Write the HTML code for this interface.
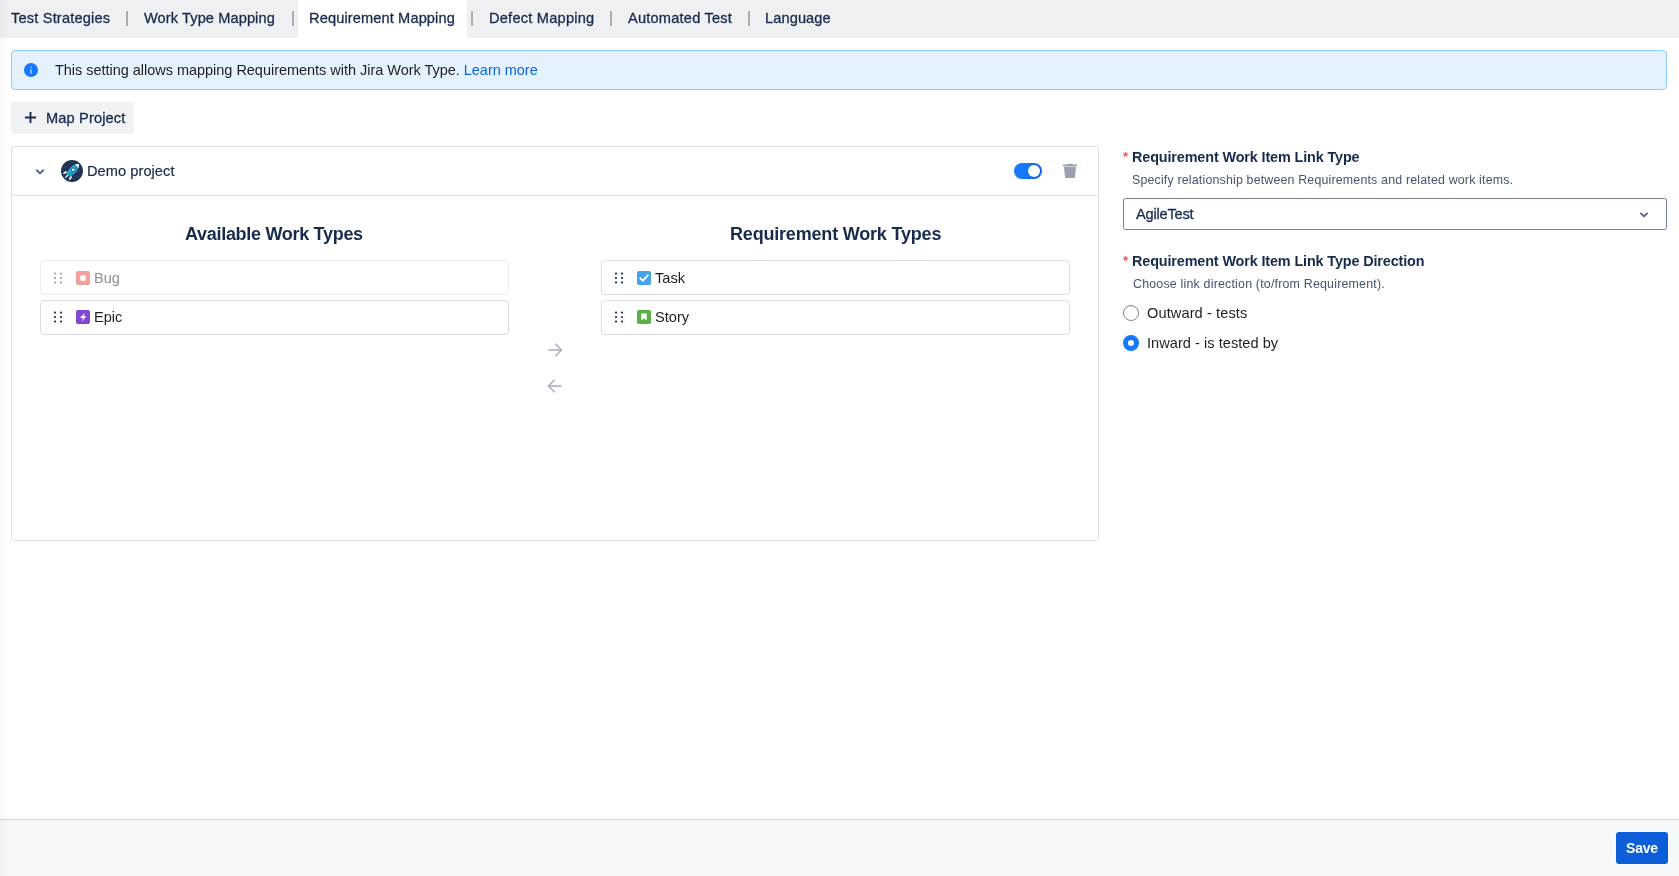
<!DOCTYPE html>
<html lang="en">
<head>
<meta charset="utf-8">
<title>Requirement Mapping</title>
<style>
*{box-sizing:border-box;margin:0;padding:0}
html,body{width:1679px;height:876px;overflow:hidden;background:#fff}
body{font-family:"Liberation Sans",Arial,sans-serif;font-size:14px;color:#172b4d;position:relative}
.abs{position:absolute}
.t{position:absolute;white-space:nowrap;line-height:20px;height:20px;will-change:transform}
.m{-webkit-text-stroke:.3px currentColor}
.m2{-webkit-text-stroke:.2px currentColor}
#edge{left:0;top:0;width:10px;height:876px;background:linear-gradient(90deg,rgba(0,0,0,.032),rgba(0,0,0,.016) 35%,rgba(0,0,0,0))}
#tabs{left:0;top:0;width:1679px;height:38px;background:#eff0f2}
#tabact{left:298px;top:0;width:169px;height:38px;background:#fff}
.sep{position:absolute;top:11px;width:2px;height:15px;background:#a8aeb9}
.tab{font-size:14.6px;color:#172b4d;top:8px}
#banner{left:11px;top:50px;width:1656px;height:40px;background:#e3f2fe;border:1px solid #91caff;border-radius:4px}
#btnmap{left:11px;top:102px;width:123px;height:32px;background:#f1f2f4;border-radius:3px}
#panel{left:11px;top:146px;width:1088px;height:395px;border:1px solid #dcdfe4;border-radius:2.500px;background:#fff}
#phead{left:11px;top:146px;width:1088px;height:50px;border:1px solid #dcdfe4;border-radius:2.500px;background:#fff}
.item{position:absolute;width:469px;height:35px;border:1px solid #d9dce3;border-radius:4px;background:#fff}
.h{font-weight:bold;font-size:18px;color:#172b4d;line-height:24px;height:24px}
#sel{left:1123px;top:198px;width:544px;height:32px;border:1px solid #73809a;border-radius:2.500px;background:#fff}
#footer{left:0;top:819px;width:1679px;height:57px;background:#f7f8f9;border-top:1px solid #d5d9df}
#save{left:1616px;top:832px;width:52px;height:32px;background:#0c5fd9;border-radius:3px}
.lbl{font-weight:bold;font-size:14.4px;color:#172b4d}
.help{font-size:12.4px;color:#44546f}
.star{color:#ff4d4f;font-size:13px;font-weight:bold}
</style>
</head>
<body>
<div class="abs" id="tabs"></div>
<div class="abs" id="tabact"></div>
<div class="sep" style="left:126px"></div>
<div class="sep" style="left:292px"></div>
<div class="sep" style="left:471px"></div>
<div class="sep" style="left:610px"></div>
<div class="sep" style="left:748px"></div>
<div class="t tab m" style="left:11px;letter-spacing:0.179px">Test Strategies</div>
<div class="t tab m" style="left:144px;letter-spacing:0.094px">Work Type Mapping</div>
<div class="t tab m" style="left:309px;letter-spacing:0.125px">Requirement Mapping</div>
<div class="t tab m" style="left:488.600px;letter-spacing:0.231px">Defect Mapping</div>
<div class="t tab m" style="left:628px;letter-spacing:0.212px">Automated Test</div>
<div class="t tab m" style="left:765.300px;letter-spacing:0.107px">Language</div>

<div class="abs" id="banner"></div>
<svg class="abs" style="left:24px;top:63px" width="14" height="14" viewBox="0 0 14 14"><circle cx="7" cy="7" r="7" fill="#1677ff"/><g fill="#fff" opacity=".62"><rect x="6.200" y="3.600" width="1.600" height="1.500"/><rect x="6.200" y="6.400" width="1.600" height="4.100"/></g></svg>
<div class="t" id="bantext" style="left:54.500px;top:60px;font-size:14.5px;letter-spacing:-0.027px;color:#1f1f1f">This setting allows mapping Requirements with Jira Work Type. <span style="color:#0c66e4">Learn more</span></div>

<div class="abs" id="btnmap"></div>
<svg class="abs" style="left:24.400px;top:111.300px" width="13" height="13" viewBox="0 0 13 13"><path d="M6.500 .9v11.200M.9 6.500h11.200" stroke="#172b4d" stroke-width="1.900" fill="none"/></svg>
<div class="t m" style="left:46px;top:108px;font-size:14.6px;color:#172b4d;letter-spacing:0.15px">Map Project</div>

<div class="abs" id="panel"></div>
<div class="abs" id="phead"></div>
<svg class="abs" style="left:34px;top:166.500px" width="12" height="10" viewBox="0 0 12 10"><path d="M2.800 3.300L6 6.400l3.200-3.100" stroke="#55637d" stroke-width="1.900" fill="none" stroke-linecap="round" stroke-linejoin="round"/></svg>
<svg class="abs" style="left:61px;top:160px" width="22" height="22" viewBox="0 0 22 22"><circle cx="11" cy="11" r="11" fill="#213455"/><g fill="#5d6f8f" opacity=".55"><circle cx="9" cy="3.500" r=".6"/><circle cx="3.600" cy="7.400" r=".6"/><circle cx="18.200" cy="11.600" r=".6"/><circle cx="16.200" cy="16.600" r=".6"/><circle cx="12.600" cy="18.200" r=".5"/></g><g transform="rotate(45 11 11)"><path d="M8 14.300L6.200 16.400V19.700L8.200 17.600zM14 14.300l1.800 2.100v3.300l-2-2.100z" fill="#fff"/><path d="M10.100 16.500h1.800l-.3 3.900h-1.200z" fill="#eef7fb"/><path d="M11 1.200C13.600 3.200 14.600 6.500 14.500 9.500 14.400 12.500 13.900 15 13.300 16.900H8.700C8.100 15 7.600 12.500 7.500 9.500 7.400 6.500 8.400 3.200 11 1.200z" fill="#1da9d2"/><path d="M11 1.200C13.600 3.200 14.600 6.500 14.500 9.500 14.400 12.500 13.900 15 13.300 16.900H11z" fill="#1a97c2"/><path d="M11 1.200c1.100.8 1.900 1.800 2.500 2.900h-5C9.100 3 9.900 2 11 1.200z" fill="#fff"/><circle cx="11" cy="9.200" r="2" fill="#1b5f86"/><circle cx="11" cy="9.200" r="1.350" fill="#fff"/></g></svg>
<div class="t m2" style="left:87.400px;top:161px;font-size:14.6px;color:#172b4d;letter-spacing:0.06px">Demo project</div>
<div class="abs" style="left:1014px;top:163px;width:28px;height:16px;border-radius:8px;background:linear-gradient(100deg,#1677ff 40%,#0c62e0)"></div>
<div class="abs" style="left:1028px;top:165px;width:12px;height:12px;border-radius:6px;background:#fff"></div>
<svg class="abs" style="left:1062px;top:163px" width="16" height="16" viewBox="0 0 16 16"><path d="M5.500.7h5l.6.900h3.800v2H1.100v-2h3.800z" fill="#9aa1b0"/><path d="M2 3.900h12l-1 10.400q-.1.800-.9.800H3.900q-.8 0-.9-.8z" fill="#9aa1b0"/></svg>

<div class="t h" style="left:185px;top:222px;letter-spacing:-0.295px">Available Work Types</div>
<div class="t h" style="left:730px;top:222px;letter-spacing:-0.19px">Requirement Work Types</div>

<div class="item" style="left:40px;top:260.300px;border-color:#e9ebee"></div>
<div class="item" style="left:40px;top:300px;height:34.500px"></div>
<div class="item" style="left:601px;top:260.300px"></div>
<div class="item" style="left:601px;top:300px;height:34.500px"></div>

<div class="t" style="left:94px;top:268px;font-size:14.6px;color:#8f8f8f">Bug</div>
<div class="t" style="left:94px;top:307px;font-size:14.6px;color:#1f1f1f">Epic</div>
<div class="t" style="left:655px;top:268px;font-size:14.6px;color:#1f1f1f">Task</div>
<div class="t" style="left:655px;top:307px;font-size:14.6px;color:#1f1f1f">Story</div>

<div class="abs" id="sel"></div>
<!-- drag handles -->
<svg class="abs dh" style="left:614px;top:272px" width="10" height="12" viewBox="0 0 10 12"><g fill="#172b4d"><circle cx="2" cy="1.500" r="1.100"/><circle cx="8" cy="1.500" r="1.100"/><circle cx="2" cy="6" r="1.100"/><circle cx="8" cy="6" r="1.100"/><circle cx="2" cy="10.500" r="1.100"/><circle cx="8" cy="10.500" r="1.100"/></g></svg>
<svg class="abs dh" style="left:614px;top:311px" width="10" height="12" viewBox="0 0 10 12"><g fill="#172b4d"><circle cx="2" cy="1.500" r="1.100"/><circle cx="8" cy="1.500" r="1.100"/><circle cx="2" cy="6" r="1.100"/><circle cx="8" cy="6" r="1.100"/><circle cx="2" cy="10.500" r="1.100"/><circle cx="8" cy="10.500" r="1.100"/></g></svg>
<svg class="abs dh" style="left:53px;top:272px;opacity:.45" width="10" height="12" viewBox="0 0 10 12"><g fill="#172b4d"><circle cx="2" cy="1.500" r="1.100"/><circle cx="8" cy="1.500" r="1.100"/><circle cx="2" cy="6" r="1.100"/><circle cx="8" cy="6" r="1.100"/><circle cx="2" cy="10.500" r="1.100"/><circle cx="8" cy="10.500" r="1.100"/></g></svg>
<svg class="abs dh" style="left:53px;top:311px" width="10" height="12" viewBox="0 0 10 12"><g fill="#172b4d"><circle cx="2" cy="1.500" r="1.100"/><circle cx="8" cy="1.500" r="1.100"/><circle cx="2" cy="6" r="1.100"/><circle cx="8" cy="6" r="1.100"/><circle cx="2" cy="10.500" r="1.100"/><circle cx="8" cy="10.500" r="1.100"/></g></svg>

<!-- type icons -->
<svg class="abs" style="left:76px;top:271px" width="14" height="14" viewBox="0 0 14 14"><rect width="14" height="14" rx="2" fill="#f0a19b"/><circle cx="7" cy="7" r="3" fill="#fff"/></svg>
<svg class="abs" style="left:76px;top:310px" width="14" height="14" viewBox="0 0 14 14"><rect width="14" height="14" rx="2" fill="#8247d5"/><path d="M8.900 2.800L3.800 8.100h3l-.6 3.300 4.200-5.300H7.600z" fill="#fff"/></svg>
<svg class="abs" style="left:637px;top:271px" width="14" height="14" viewBox="0 0 14 14"><rect width="14" height="14" rx="2" fill="#45a5e4"/><path d="M3.300 7.200l2.600 2.700 4.900-5.600" stroke="#fff" stroke-width="1.800" fill="none" stroke-linecap="round" stroke-linejoin="round"/></svg>
<svg class="abs" style="left:637px;top:310px" width="14" height="14" viewBox="0 0 14 14"><rect width="14" height="14" rx="2" fill="#5bb043"/><path d="M4.300 3.500h5.400v7l-2.700-2.300-2.700 2.300z" fill="#fff"/></svg>

<!-- arrows -->
<svg class="abs" style="left:547px;top:342px" width="16" height="16" viewBox="0 0 16 16"><path d="M1.300 8h13.200M8.300 1.800l6.200 6.200-6.200 6.200" stroke="#a7aebb" stroke-width="1.500" fill="none"/></svg>
<svg class="abs" style="left:547px;top:378px" width="16" height="16" viewBox="0 0 16 16"><path d="M14.700 8H1.500M7.700 1.800L1.500 8l6.200 6.200" stroke="#a7aebb" stroke-width="1.500" fill="none"/></svg>

<!-- right form -->
<div class="t star" style="left:1123px;top:147px">*</div>
<div class="t lbl" style="left:1132.200px;top:147px;letter-spacing:-0.127px">Requirement Work Item Link Type</div>
<div class="t help" style="left:1132.200px;top:170px;letter-spacing:0.175px">Specify relationship between Requirements and related work items.</div>
<div class="t m" style="left:1135.500px;top:204px;font-size:14.600px;color:#172b4d;letter-spacing:-0.2px">AgileTest</div>
<svg class="abs" style="left:1637.900px;top:209.700px" width="12" height="10" viewBox="0 0 12 10"><path d="M2.900 3.400L6 6.400l3.100-3" stroke="#55637d" stroke-width="1.900" fill="none" stroke-linecap="round" stroke-linejoin="round"/></svg>
<div class="t star" style="left:1123px;top:251px">*</div>
<div class="t lbl" style="left:1132.400px;top:251px;letter-spacing:-0.13px">Requirement Work Item Link Type Direction</div>
<div class="t help" style="left:1133px;top:274px;letter-spacing:0.2px">Choose link direction (to/from Requirement).</div>
<div class="abs" style="left:1123px;top:305px;width:16px;height:16px;border-radius:8px;border:1px solid #7a869a;background:#fff"></div>
<div class="abs" style="left:1123px;top:335px;width:16px;height:16px;border-radius:8px;border:5px solid #1677ff;background:#fff"></div>
<div class="t" style="left:1147px;top:303px;font-size:14.600px;color:#1f1f1f;letter-spacing:0.093px">Outward - tests</div>
<div class="t" style="left:1147px;top:333px;font-size:14.600px;color:#1f1f1f;letter-spacing:0.025px">Inward - is tested by</div>

<div class="abs" id="footer"></div>
<div class="abs" id="save"></div>
<div class="t" style="left:1626px;top:838px;font-size:14px;font-weight:bold;letter-spacing:-0.2px;color:#fff">Save</div>
<div class="abs" id="edge"></div>
</body>
</html>
